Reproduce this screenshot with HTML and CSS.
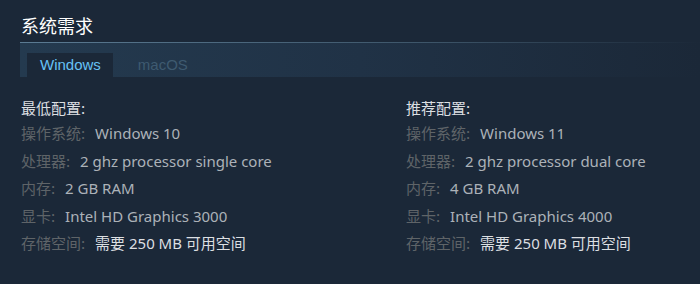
FILE: index.html
```html
<!DOCTYPE html>
<html lang="zh-CN">
<head>
  <meta charset="UTF-8" />
  <title>系统需求</title>
  <link rel="stylesheet" href="styles.css">
</head>
<body>
  <div class="sysreq">
    <h2 class="title">系统需求</h2>
    <div class="tabs">
      <div class="tab active">Windows</div>
      <div class="tab">macOS</div>
    </div>

    <div class="cols">
      <div class="col">
        <div class="head">最低配置:</div>
        <ul class="reqs">
          <li><span class="lbl">操作系统:</span> Windows 10</li>
          <li><span class="lbl">处理器:</span> 2 ghz processor single core</li>
          <li><span class="lbl">内存:</span> 2 GB RAM</li>
          <li><span class="lbl">显卡:</span> Intel HD Graphics 3000</li>
          <li><span class="lbl">存储空间:</span> <span class="bright">需要 250 MB 可用空间</span></li>
        </ul>
      </div>
      <div class="col">
        <div class="head">推荐配置:</div>
        <ul class="reqs">
          <li><span class="lbl">操作系统:</span> Windows 11</li>
          <li><span class="lbl">处理器:</span> 2 ghz processor dual core</li>
          <li><span class="lbl">内存:</span> 4 GB RAM</li>
          <li><span class="lbl">显卡:</span> Intel HD Graphics 4000</li>
          <li><span class="lbl">存储空间:</span> <span class="bright">需要 250 MB 可用空间</span></li>
        </ul>
      </div>
    </div>
  </div>
</body>
</html>
```

FILE: styles.css
```css
html, body {
  margin: 0; padding: 0;
  background: #1b2838;
  color: #acb2b8;
  font-family: "Noto Sans", "Noto Sans CJK SC", sans-serif;
  overflow: hidden;
}

.sysreq {
  padding: 13px 0 0 20px;
}

.title {
  margin: 0;
  padding-left: 1px;
  font-size: 18px;
  font-weight: normal;
  line-height: 26px;
  color: #fff;
  height: 29px;
  border-bottom: 1px solid #4a6276;
  border-image: linear-gradient(90deg, #5b7b93 0%, #3d5569 60%, #1b2838 100%) 1;
}

.tabs {
  display: flex;
  align-items: flex-end;
  gap: 12px;
  height: 34px;
  padding-left: 7px;
  background: linear-gradient(90deg, #243a4f 0%, #203246 50%, #1b2838 100%);
}

.tab {
  font-family: "Liberation Sans", Arial, sans-serif;
  font-size: 15px;
  line-height: 24px;
  height: 24px;
  padding: 0 12px 0 13px;
  color: #3e5a70;
}

.tab.active {
  background: #1b2838;
  color: #67c1f5;
}

.cols {
  display: flex;
  padding-top: 21px;
}

.col {
  flex: 0 0 384px;
  padding-left: 1px;
}

.col + .col {
  flex: 1 1 auto;
  min-width: 0;
}

.head {
  font-size: 15px;
  line-height: 20px;
  color: #dcdfe2;
  height: 25px;
  font-family: "Noto Sans CJK SC", sans-serif;
}

.reqs {
  list-style: none;
  margin: 0; padding: 0;
}

.reqs li {
  font-size: 15px;
  line-height: 20px;
  height: 27.5px;
  white-space: nowrap;
}

.lbl {
  font-family: "Noto Sans CJK SC", sans-serif;
  color: #5f6468;
  margin-right: 6px;
}

.bright {
  color: #dcdfe2;
}
```
